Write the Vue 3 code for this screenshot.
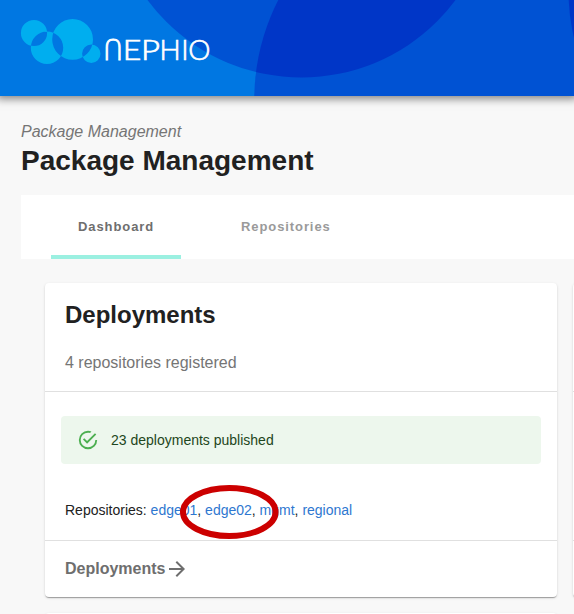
<script setup>
const tabs = ['Dashboard', 'Repositories']
const repositories = ['edge01', 'edge02', 'mgmt', 'regional']
</script>

<template>
  <div class="page">
    <header class="banner">
      <svg class="waves" width="574" height="96" viewBox="0 0 574 96" aria-hidden="true">
        <rect width="574" height="96" fill="#0077e2" />
        <circle cx="301.5" cy="-114.3" r="191.8" fill="#0052d3" />
        <circle cx="473.8" cy="100" r="219.6" fill="#0052d3" />
        <clipPath id="left-disc"><circle cx="301.5" cy="-114.3" r="191.8" /></clipPath>
        <circle cx="473.8" cy="100" r="219.6" fill="#0036c7" clip-path="url(#left-disc)" />
        <circle cx="760.5" cy="-8" r="192" fill="#0036c7" />
      </svg>
      <svg class="logo" width="200" height="60" viewBox="15 10 200 60">
        <path
          fill="#00aeef"
          fill-rule="evenodd"
          d="M20.9 33a13.1 13.1 0 1 0 26.2 0a13.1 13.1 0 1 0-26.2 0Z
             M30.8 47.8a16.2 16.2 0 1 0 32.4 0a16.2 16.2 0 1 0-32.4 0Z
             M52.2 39.4a20.4 20.4 0 1 0 40.8 0a20.4 20.4 0 1 0-40.8 0Z
             M82.1 53.7a9.2 9.2 0 1 0 18.4 0a9.2 9.2 0 1 0-18.4 0Z"
        />
        <g class="wordmark">
          <text class="arch" x="103.1" y="59.5">Ո</text>
          <text x="122.8" y="59.5" textLength="18.6" lengthAdjust="spacingAndGlyphs">E</text>
          <text x="141" y="59.5" textLength="19" lengthAdjust="spacingAndGlyphs">P</text>
          <text x="159.6 181.2 188.2" y="59.5">HIO</text>
        </g>
      </svg>
    </header>

    <main class="content">
      <p class="crumb">Package Management</p>
      <h1 class="title">Package Management</h1>

      <nav class="tabs">
        <a v-for="(tab, i) in tabs" :key="tab" class="tab" :class="{ active: i === 0 }">{{ tab }}</a>
      </nav>

      <div class="cards">
        <section class="card">
          <div class="card-head">
            <h2>Deployments</h2>
            <p>4 repositories registered</p>
          </div>
          <div class="card-body">
            <div class="alert">
              <svg width="22" height="22" viewBox="0 0 24 24" fill="#4caf50">
                <path d="M20,12A8,8 0 0,1 12,20A8,8 0 0,1 4,12A8,8 0 0,1 12,4C12.76,4 13.5,4.11 14.2, 4.31L15.77,2.74C14.61,2.26 13.34,2 12,2A10,10 0 0,0 2,12A10,10 0 0,0 12,22A10,10 0 0, 0 22,12M7.91,10.08L6.5,11.5L11,16L21,6L19.59,4.58L11,13.17L7.91,10.08Z" />
              </svg>
              <span>23 deployments published</span>
            </div>
            <div class="repos">
              Repositories:
              <template v-for="(repo, i) in repositories" :key="repo"><a>{{ repo }}</a><template v-if="i < repositories.length - 1">, </template></template>
              <svg class="marker" width="100" height="56" viewBox="0 0 100 56">
                <ellipse cx="50.3" cy="28" rx="46.3" ry="24" fill="none" stroke="#cc0000" stroke-width="6" />
              </svg>
            </div>
          </div>
          <a class="card-link">
            <span>Deployments</span>
            <svg width="24" height="24" viewBox="0 0 24 24" fill="currentColor">
              <path d="M12 4l-1.41 1.41L16.17 11H4v2h12.17l-5.58 5.59L12 20l8-8z" />
            </svg>
          </a>
        </section>
        <section class="card">
          <div class="card-head"></div>
          <div class="card-body"></div>
        </section>
        <section class="card"></section>
      </div>
    </main>
  </div>
</template>

<style>
body {
  background: #f8f8f8;
}
</style>

<style scoped>
.page {
  width: 574px;
  height: 614px;
  overflow: hidden;
  background: #f8f8f8;
  color: #212121;
  font-family: 'Liberation Sans', Arial, sans-serif;
}
.page * {
  box-sizing: border-box;
}
h1,
h2,
p {
  margin: 0;
}
.banner {
  position: relative;
  height: 96px;
  padding: 10px 15px;
  box-shadow: 0 0 8px 3px rgba(20, 20, 20, 0.5);
}
.waves {
  position: absolute;
  top: 0;
  left: 0;
}
.logo {
  position: relative;
  display: block;
}
.wordmark {
  fill: #fff;
  stroke: #fff;
  stroke-width: 0.7px;
  font-family: Lato, sans-serif;
  font-size: 28px;
  font-weight: 300;
}
.arch {
  font-family: 'DejaVu Sans', sans-serif;
  font-size: 27.5px;
  font-weight: 200;
  stroke-width: 0.9px;
}
.content {
  padding: 25px 0 0 21px;
}
.crumb {
  color: #757575;
  font-size: 16px;
  font-style: italic;
  line-height: 22px;
}
.title {
  font-size: 28px;
  line-height: 36px;
}
.tabs {
  display: flex;
  height: 64px;
  margin-top: 16px;
  padding-left: 30px;
  gap: 33px;
  background: #fff;
}
.tab {
  height: 64px;
  padding: 0 27px;
  color: #9a9a9a;
  font-size: 13px;
  font-weight: 700;
  letter-spacing: 0.91px;
  line-height: 63px;
}
.tab.active {
  width: 130px;
  color: #6e6e6e;
  border-bottom: 4px solid #9bf0e1;
}
.cards {
  display: grid;
  grid-template-columns: 512px 512px;
  grid-auto-rows: 314px;
  gap: 16px;
  padding: 24px 0 0 24px;
}
.card {
  background: #fff;
  border-radius: 4px;
  box-shadow: 0 2px 1px -1px rgba(0, 0, 0, 0.2), 0 1px 1px rgba(0, 0, 0, 0.14), 0 1px 3px rgba(0, 0, 0, 0.12);
}
.card-head {
  height: 109px;
  padding: 16px 20px;
  border-bottom: 1px solid #e0e0e0;
}
.card-head h2 {
  font-size: 24px;
  line-height: 32px;
}
.card-head p {
  margin-top: 20px;
  color: #757575;
  font-size: 16px;
  line-height: 24px;
}
.card-body {
  height: 149px;
  padding: 24px 16px 0;
  border-bottom: 1px solid #e0e0e0;
}
.alert {
  display: flex;
  align-items: center;
  gap: 12px;
  height: 48px;
  padding: 0 16px;
  border-radius: 4px;
  background: #edf7ed;
  color: #1e4620;
  font-size: 14px;
}
.repos {
  position: relative;
  margin-top: 36px;
  padding-left: 4px;
  font-size: 14px;
  line-height: 20px;
}
.repos a {
  color: #2e77d0;
}
.marker {
  position: absolute;
  top: -16px;
  left: 118px;
}
.card-link {
  display: flex;
  align-items: center;
  height: 56px;
  padding-left: 20px;
  color: #6e6e6e;
  font-size: 16px;
  font-weight: 700;
}
</style>
